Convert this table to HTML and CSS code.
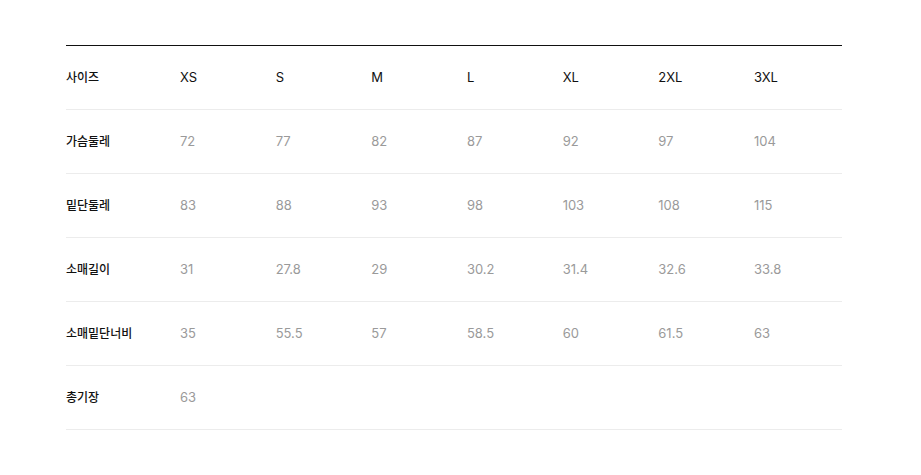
FILE: index.html
```html
<!DOCTYPE html>
<html lang="ko">
<head>
<meta charset="utf-8">
<link rel="stylesheet" href="styles.css">
</head>
<body>
<div class="page">
  <div class="size-table">
    <div class="row head">
      <div class="label">사이즈</div>
      <div>XS</div><div>S</div><div>M</div><div>L</div><div>XL</div><div>2XL</div><div>3XL</div>
    </div>
    <div class="row">
      <div class="label">가슴둘레</div>
      <div>72</div><div>77</div><div>82</div><div>87</div><div>92</div><div>97</div><div>104</div>
    </div>
    <div class="row">
      <div class="label">밑단둘레</div>
      <div>83</div><div>88</div><div>93</div><div>98</div><div>103</div><div>108</div><div>115</div>
    </div>
    <div class="row">
      <div class="label">소매길이</div>
      <div>31</div><div>27.8</div><div>29</div><div>30.2</div><div>31.4</div><div>32.6</div><div>33.8</div>
    </div>
    <div class="row">
      <div class="label">소매밑단너비</div>
      <div>35</div><div>55.5</div><div>57</div><div>58.5</div><div>60</div><div>61.5</div><div>63</div>
    </div>
    <div class="row">
      <div class="label">총기장</div>
      <div>63</div><div></div><div></div><div></div><div></div><div></div><div></div>
    </div>
  </div>
</div>
</body>
</html>
```
FILE: styles.css
```css
html, body {
  margin: 0;
  padding: 0;
  background: #fff;
}
.page {
  padding: 45px 79px 0 66px;
}
.size-table {
  border-top: 1px solid #111;
  font-family: Inter, "Noto Sans CJK KR", sans-serif;
  font-size: 13px;
}
.row {
  display: grid;
  grid-template-columns: 114px repeat(6, 95.67px) 1fr;
  align-items: center;
  height: 63px;
  border-bottom: 1px solid #ececec;
  color: #9a9a9a;
  line-height: 16px;
}
.row > div {
  padding-bottom: 1px;
}
.row.head {
  color: #111;
}
.label {
  font-family: "Noto Sans CJK KR", sans-serif;
  font-size: 12px;
  font-weight: 500;
  color: #111;
}
```
